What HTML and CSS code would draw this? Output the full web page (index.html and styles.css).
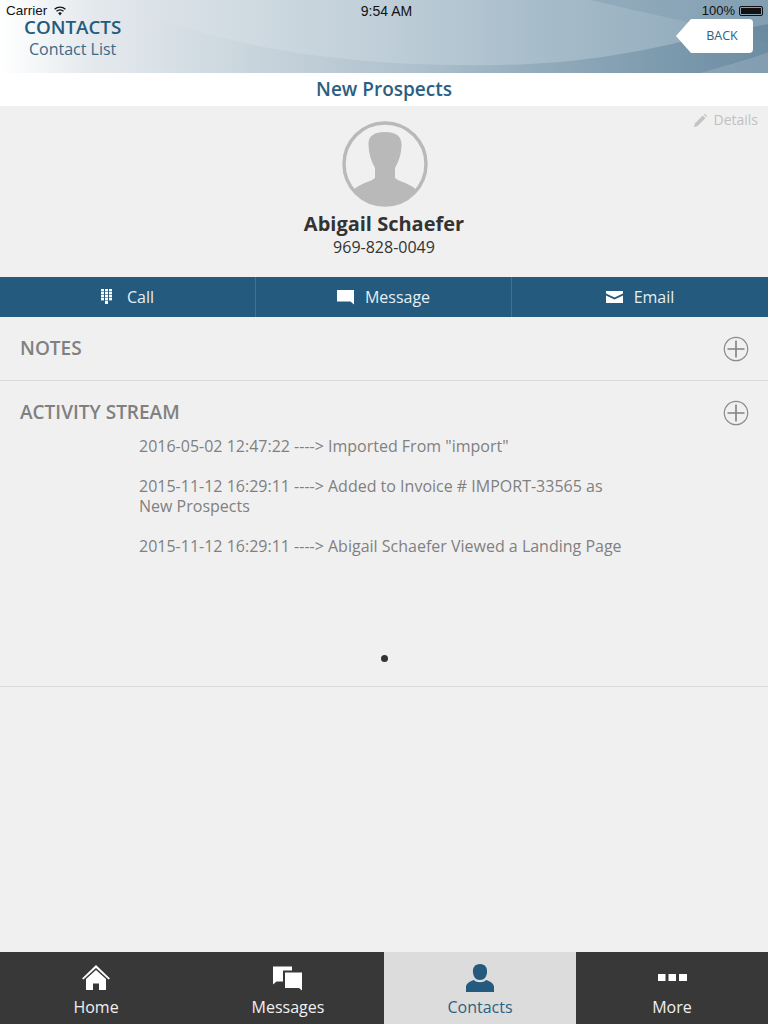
FILE: index.html
```html
<!DOCTYPE html>
<html lang="en">
<head>
    <meta charset="UTF-8">
    <meta name="viewport" content="width=device-width, initial-scale=1.0">
    <title>Contact</title>
    <link rel="stylesheet" href="styles.css">
</head>
<body>

    <!-- Header -->
    <header class="header">
        <svg class="header-bg" width="768" height="73" viewBox="0 0 768 73">
            <defs>
                <linearGradient id="waveLow" x1="0" y1="0" x2="1" y2="0">
                    <stop offset="0" stop-color="#5f8199" stop-opacity="0"/>
                    <stop offset="0.45" stop-color="#5f8199" stop-opacity="0.14"/>
                    <stop offset="1" stop-color="#4f748d" stop-opacity="0.5"/>
                </linearGradient>
            </defs>
            <path d="M140 14C220 40 320 68 500 65C570 64 630 54 680 42L768 24V73H140Z" fill="url(#waveLow)"/>
            <path d="M590 0C650 14 710 26 768 42V0Z" fill="#5f8199" fill-opacity="0.2"/>
            <path d="M700 73C725 66 748 60 768 52V73Z" fill="#ffffff" fill-opacity="0.14"/>
        </svg>
        <div class="status-bar">
            <div class="status-left">
                Carrier
                <svg width="12" height="10" viewBox="0 0 12 10">
                    <path d="M0.600 3.300A8 8 0 0 1 11.400 3.300" fill="none" stroke="#111" stroke-width="1.300"/>
                    <path d="M2.500 5.300A5.200 5.200 0 0 1 9.500 5.300" fill="none" stroke="#111" stroke-width="1.300"/>
                    <path d="M4.100 7.100A3 3 0 0 1 7.900 7.100L6 9.500Z" fill="#111"/>
                </svg>
            </div>
            <div class="status-time">9:54 AM</div>
            <div class="status-right">
                100%
                <span class="battery"><span class="battery-fill"></span></span>
            </div>
        </div>
        <div class="header-row">
            <div class="header-titles">
                <div class="header-title">CONTACTS</div>
                <div class="header-sub">Contact List</div>
            </div>
            <div class="back-btn">BACK</div>
        </div>
    </header>

    <div class="group-bar">New Prospects</div>

    <!-- Contact card -->
    <section class="profile">
        <div class="details-link">
            <svg width="15" height="15" viewBox="0 0 15 15">
                <path d="M1 14L1.800 10.600L9.800 2.600L12.400 5.200L4.400 13.200Z" fill="#c4c4c4"/>
                <path d="M10.800 1.600L11.800 0.800L14.200 3.200L13.400 4.200Z" fill="#c4c4c4"/>
            </svg>
            Details
        </div>
        <svg class="avatar" width="86" height="86" viewBox="0 0 86 86">
            <defs>
                <clipPath id="avatarClip"><circle cx="43" cy="43" r="40"/></clipPath>
            </defs>
            <circle cx="43" cy="43" r="41" fill="#f0f0f0" stroke="#b9b9b9" stroke-width="3.400"/>
            <path clip-path="url(#avatarClip)" d="M26.500 24C26 15 32 11 43 11C54 11 60 15 59.500 25C59.200 33 57 40 53 47V57C56 60 66 62 73 67.500V86H13V67.500C20 62 30 60 33 57V47C29 40 26.800 33 26.500 24Z" fill="#b9b9b9"/>
        </svg>
        <div class="profile-name">Abigail Schaefer</div>
        <div class="profile-phone">969-828-0049</div>
    </section>

    <!-- Actions -->
    <nav class="actions">
        <div class="action">
            <svg class="action-icon" width="15" height="16" viewBox="0 0 15 16" fill="#fff">
                <rect x="0" y="0" width="3" height="2.400"/><rect x="4" y="0" width="3" height="2.400"/><rect x="8" y="0" width="3" height="2.400"/>
                <rect x="0" y="3" width="3" height="2.400"/><rect x="4" y="3" width="3" height="2.400"/><rect x="8" y="3" width="3" height="2.400"/>
                <rect x="0" y="6" width="3" height="2.400"/><rect x="4" y="6" width="3" height="2.400"/><rect x="8" y="6" width="3" height="2.400"/>
                <rect x="0" y="9" width="3" height="2.400"/><rect x="4" y="9" width="3" height="2.400"/><rect x="8" y="9" width="3" height="2.400"/>
                <rect x="4" y="12" width="3" height="3"/>
            </svg>
            Call
        </div>
        <div class="action">
            <svg class="action-icon" width="17" height="16" viewBox="0 0 17 16" fill="#fff">
                <path d="M0 1H17V15.500L13.500 12.500H0Z"/>
            </svg>
            Message
        </div>
        <div class="action">
            <svg class="action-icon" width="17" height="12" viewBox="0 0 17 12" fill="#fff">
                <path d="M0 0H17V2.600L8.500 6.400L0 2.600Z"/>
                <path d="M0 4.600L8.500 8.400L17 4.600V12H0Z"/>
            </svg>
            Email
        </div>
    </nav>

    <!-- Notes -->
    <section class="panel panel-notes">
        <div class="panel-head">
            <h2>NOTES</h2>
            <svg class="plus" width="26" height="26" viewBox="0 0 26 26">
                <circle cx="13" cy="13" r="11.700" fill="none" stroke="#8a8a8a" stroke-width="1.200"/>
                <path d="M13 4.500V21.500M4.500 13H21.500" stroke="#808080" stroke-width="1.600"/>
            </svg>
        </div>
    </section>

    <!-- Activity stream -->
    <section class="panel panel-activity">
        <div class="panel-head">
            <h2>ACTIVITY STREAM</h2>
            <svg class="plus" width="26" height="26" viewBox="0 0 26 26">
                <circle cx="13" cy="13" r="11.700" fill="none" stroke="#8a8a8a" stroke-width="1.200"/>
                <path d="M13 4.500V21.500M4.500 13H21.500" stroke="#808080" stroke-width="1.600"/>
            </svg>
        </div>
        <div class="stream">
            <p>2016-05-02 12:47:22 ----&gt; Imported From "import"</p>
            <p>2015-11-12 16:29:11 ----&gt; Added to Invoice # IMPORT-33565 as New Prospects</p>
            <p>2015-11-12 16:29:11 ----&gt; Abigail Schaefer Viewed a Landing Page</p>
        </div>
        <div class="pager"><span class="pager-dot"></span></div>
    </section>

    <div class="spacer"></div>

    <!-- Tab bar -->
    <footer class="tabs">
        <div class="tab">
            <svg width="28" height="26" viewBox="0 0 28 26" fill="#fff">
                <path d="M14 0L28 13.500L26.600 14.600L14 3L1.400 14.600L0 13.500Z"/>
                <path d="M14 5L24 14V25H17V18.500H11V25H4V14Z"/>
            </svg>
            <span>Home</span>
        </div>
        <div class="tab">
            <svg width="30" height="25" viewBox="0 0 30 25" fill="#fff">
                <path d="M0 1H19V5H10V16H3.500L0 19Z"/>
                <path d="M12 7H29V25L26 22.500H12Z"/>
            </svg>
            <span>Messages</span>
        </div>
        <div class="tab tab-active">
            <svg width="28" height="28" viewBox="0 0 28 28" fill="#235a7d">
                <path d="M14 0C19 0 21.500 3.500 21 8.500C20.600 12.500 18.500 16 14 16C9.500 16 7.400 12.500 7 8.500C6.500 3.500 9 0 14 0Z"/>
                <path d="M8 16C10 19 18 19 20 16C24.500 17.500 28 19.500 28 23V28H0V23C0 19.500 3.500 17.500 8 16Z"/>
            </svg>
            <span>Contacts</span>
        </div>
        <div class="tab">
            <svg width="29" height="26" viewBox="0 0 29 26" fill="#fff">
                <rect x="0" y="9" width="7.500" height="7"/><rect x="10.500" y="9" width="7.500" height="7"/><rect x="21" y="9" width="8" height="7"/>
            </svg>
            <span>More</span>
        </div>
    </footer>

</body>
</html>
```

FILE: styles.css
```css
/* General Styles */
body {
    margin: 0;
    width: 768px;
    height: 1024px;
    display: flex;
    flex-direction: column;
    overflow: hidden;
    font-family: "Open Sans", sans-serif;
    background: #f0f0f0;
    color: #333;
}

/* Header */
.header {
    position: relative;
    height: 73px;
    flex: none;
    background: linear-gradient(90deg, #ffffff 0%, #e4e9ed 12%, #d6dfe5 25%, #bfced8 50%, #a5bbc9 72%, #8ba6b8 100%);
    overflow: hidden;
}

.header-bg {
    position: absolute;
    top: 0;
    left: 0;
}

.status-bar {
    position: relative;
    height: 16px;
    margin-top: 3px;
    display: flex;
    justify-content: space-between;
    align-items: center;
    padding: 0 4px 0 6px;
    font-family: "Liberation Sans", sans-serif;
    font-size: 13.5px;
    line-height: 16px;
    color: #111;
}

.status-left, .status-right {
    width: 150px;
    display: flex;
    align-items: center;
    gap: 7px;
}

.status-right {
    justify-content: flex-end;
    gap: 4px;
    font-size: 13px;
}

.status-time {
    margin-left: 3px;
    font-size: 14px;
}

.battery {
    width: 24px;
    height: 10px;
    box-sizing: border-box;
    border: 1px solid #111;
    border-radius: 2px;
    padding: 1px;
    margin-right: 1px;
}

.battery-fill {
    display: block;
    height: 100%;
    background: #111;
}

.header-row {
    position: relative;
    display: flex;
    justify-content: space-between;
    padding: 0 15px 0 24px;
}

.header-titles {
    text-align: center;
    color: #235a7d;
}

.header-title {
    margin-top: -1px;
    font-size: 18.8px;
    font-weight: 600;
    line-height: 18px;
}

.header-sub {
    margin-top: 2px;
    font-size: 16px;
    line-height: 22px;
    color: #3a6a8a;
}

.back-btn {
    width: 62px;
    height: 34px;
    background: #fff;
    color: #2f6080;
    font-size: 12.5px;
    line-height: 34px;
    text-align: center;
    border-radius: 0 4px 4px 0;
    position: relative;
}

.back-btn::before {
    content: "";
    position: absolute;
    left: -15px;
    top: 0;
    width: 15px;
    height: 34px;
    background: #fff;
    clip-path: polygon(100% 0, 0 50%, 100% 100%);
}

/* Group Title */
.group-bar {
    height: 33px;
    flex: none;
    background: #fff;
    color: #2c5f80;
    font-size: 19px;
    font-weight: 600;
    line-height: 33px;
    text-align: center;
}

/* Profile */
.profile {
    position: relative;
    height: 171px;
    flex: none;
    display: flex;
    flex-direction: column;
    align-items: center;
    box-sizing: border-box;
    padding-top: 15px;
}

.details-link {
    position: absolute;
    top: 4px;
    right: 10px;
    display: flex;
    align-items: center;
    gap: 5px;
    font-size: 14px;
    line-height: 20px;
    color: #c0c0c0;
}

.avatar {
    display: block;
    margin-left: 1px;
}

.profile-name {
    margin-top: 3px;
    font-size: 20px;
    font-weight: 700;
    line-height: 27px;
    color: #333;
}

.profile-phone {
    margin-top: -1px;
    font-size: 16px;
    font-weight: 500;
    line-height: 22px;
    color: #333;
}

/* Action Bar */
.actions {
    height: 40px;
    flex: none;
    display: grid;
    grid-template-columns: repeat(3, 1fr);
    background: #235a7d;
}

.action {
    display: flex;
    align-items: center;
    justify-content: center;
    gap: 11px;
    box-sizing: border-box;
    font-size: 16px;
    color: #e6eef3;
    border-right: 1px solid #3f7191;
}

.action:last-child {
    border-right: none;
}

/* Panels */
.panel {
    flex: none;
    box-sizing: border-box;
    border-bottom: 1px solid #d9d9d9;
}

.panel-notes {
    height: 64px;
}

.panel-activity {
    height: 306px;
}

.panel-head {
    display: flex;
    justify-content: space-between;
    align-items: center;
    height: 64px;
    padding: 0 19px 0 20px;
}

.panel-head h2 {
    margin: -2px 0 0;
    font-size: 19px;
    font-weight: 600;
    color: #808080;
}

.stream {
    width: 500px;
    margin: -9px 0 0 139px;
    font-size: 16px;
    line-height: 20px;
    color: #808080;
}

.stream p {
    margin: 0 0 20px;
}

.pager {
    display: flex;
    justify-content: center;
    margin-top: 99px;
}

.pager-dot {
    width: 7px;
    height: 7px;
    border-radius: 50%;
    background: #333;
}

.spacer {
    flex: 1;
}

/* Tab Bar */
.tabs {
    height: 72px;
    flex: none;
    display: grid;
    grid-template-columns: repeat(4, 1fr);
    background: #383838;
}

.tab {
    display: flex;
    flex-direction: column;
    align-items: center;
    padding-top: 12px;
    box-sizing: border-box;
    font-size: 16px;
    color: #f0f0f0;
}

.tab span {
    margin-top: 4px;
    line-height: 22px;
}

.tab svg {
    height: 28px;
}

.tab-active {
    background: #dcdcdc;
    color: #2f6080;
}
```
